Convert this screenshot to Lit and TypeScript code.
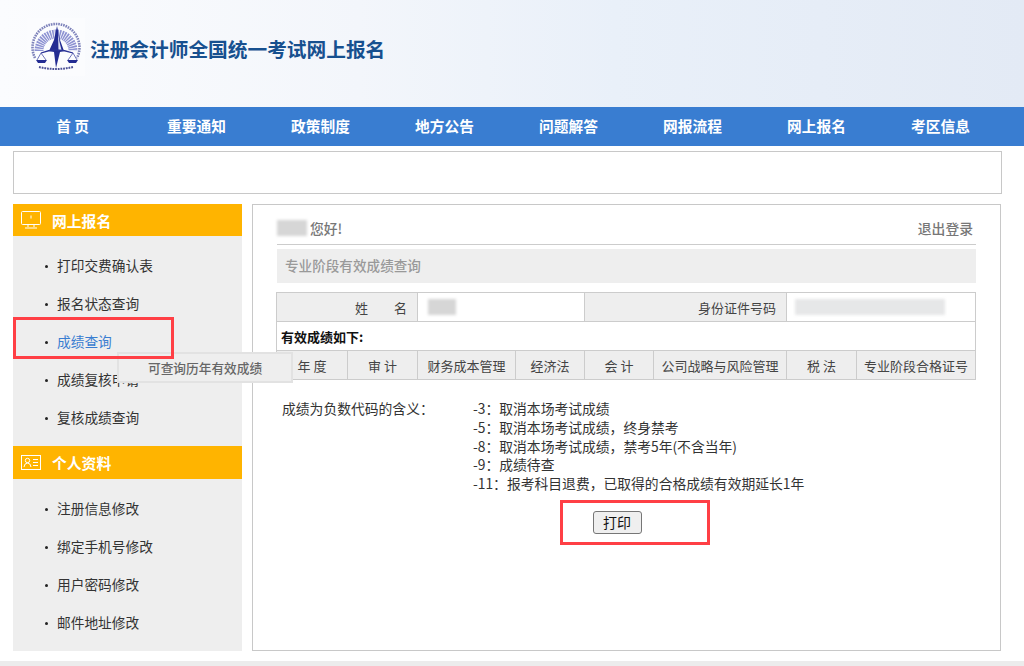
import { LitElement, html, css, svg, unsafeCSS } from 'lit';
import { customElement } from 'lit/decorators.js';

const CN = unsafeCSS(`"Noto Sans CJK SC", "Liberation Sans", sans-serif`);

const NAV = ['首 页', '重要通知', '政策制度', '地方公告', '问题解答', '网报流程', '网上报名', '考区信息'];
const MENU_A = ['打印交费确认表', '报名状态查询', '成绩查询', '成绩复核申请', '复核成绩查询'];
const MENU_B = ['注册信息修改', '绑定手机号修改', '用户密码修改', '邮件地址修改'];
const SCORE_COLS = [
  ['年 度', 71], ['审 计', 70], ['财务成本管理', 98], ['经济法', 69], ['会 计', 69],
  ['公司战略与风险管理', 133], ['税 法', 70], ['专业阶段合格证号', 119],
] as const;
const CODES = [
  '-3：取消本场考试成绩',
  '-5：取消本场考试成绩，终身禁考',
  '-8：取消本场考试成绩，禁考5年(不含当年)',
  '-9：成绩待查',
  '-11：报考科目退费，已取得的合格成绩有效期延长1年',
];

const logo = svg`
  <svg class="logo" width="58" height="58" viewBox="0 0 58 58">
    <rect width="58" height="58" fill="#fbfcfe" />
    <path d="M8 40A23.5 23.5 0 1 1 50 40" fill="none" stroke="#7d82ba" stroke-width="2.6" stroke-dasharray="1.6 .9" />
    <path d="M12 33a17 17 0 0 1 34 0" fill="none" stroke="#8d92d2" stroke-width="9" stroke-dasharray="1.5 .8" />
    <path d="M30 8l3 14 4 11-4 1-4 16-2-16-5-1 5-11z" fill="#232c92" />
    <path d="M31 14l1.5 10 2 8-3 1z" fill="#dfe2f5" />
    <path d="M14 35q15-6 32 0" fill="none" stroke="#2a3396" stroke-width="1.3" />
    <path d="M14 35l-4 7M14 35l5 7M46 35l-5 7M46 35l4 7" stroke="#4a50a8" stroke-width=".8" fill="none" />
    <path d="M9 42h11l-2 3h-7zM40 42h11l-2 3h-7z" fill="#232c92" />
    <path d="M12 49q17 4 34 0" fill="none" stroke="#4b5096" stroke-width="2" stroke-dasharray="1.8 .9" />
  </svg>`;

const monitorIcon = svg`
  <svg width="20" height="18" viewBox="0 0 20 18" fill="none" stroke="#fff" stroke-width="1">
    <rect x=".5" y=".5" width="19" height="13" rx="1" />
    <path d="M10 4.5v3M7 14v2M13 14v2M4 17h12" />
  </svg>`;

const cardIcon = svg`
  <svg width="20" height="15" viewBox="0 0 20 15" fill="none" stroke="#fff" stroke-width="1">
    <rect x=".5" y=".5" width="19" height="14" />
    <circle cx="6.5" cy="5.5" r="2.2" />
    <path d="M3 12q.5-4 3.5-4t3.5 4M12 4.5h5M12 7.5h5M12 10.5h5" />
  </svg>`;

@customElement('app-root')
export class AppRoot extends LitElement {
  static styles = css`
    :host {
      display: block;
      width: 1024px;
      height: 666px;
      overflow: hidden;
      position: relative;
      background: #fff;
      font-family: ${CN};
      font-size: 14px;
      color: #333;
    }
    .head {
      height: 107px;
      box-sizing: border-box;
      padding: 18px 0 0 27px;
      display: flex;
      gap: 5px;
      background: linear-gradient(90deg, #fbfcfe 0%, #f3f6fb 35%, #e9f0f9 60%, #e3eaf5 100%);
    }
    .logo {
      filter: blur(0.4px);
    }
    .title {
      margin-top: 17px;
      font-size: 19.7px;
      line-height: 28px;
      font-weight: 700;
      color: #17508f;
    }
    nav {
      height: 39px;
      background: #397dd1;
      display: flex;
      padding-left: 10.5px;
    }
    nav a {
      width: 124px;
      line-height: 38px;
      text-align: center;
      color: #fff;
      font-size: 14.7px;
      font-weight: 700;
    }
    .notice {
      height: 41px;
      margin: 5px 22px 0 13px;
      border: 1px solid #c8c8c8;
    }
    .main {
      display: flex;
      gap: 10px;
      margin: 10px 23px 0 13px;
    }
    aside {
      width: 229px;
      height: 447px;
      background: #eee;
    }
    .side-head {
      height: 32px;
      background: #ffb400;
      display: flex;
      align-items: center;
      gap: 11px;
      padding-left: 8px;
      color: #fff;
      font-size: 14.8px;
      font-weight: 700;
    }
    ul + .side-head {
      height: 33px;
    }
    aside ul {
      list-style: none;
      margin: 0;
      padding: 9.6px 0 10px 32px;
    }
    aside li {
      height: 38.1px;
      display: flex;
      align-items: center;
      gap: 9px;
      font-size: 13.7px;
      white-space: nowrap;
    }
    aside li::before {
      content: '';
      width: 3px;
      height: 3px;
      border-radius: 50%;
      background: #222;
      margin-top: 3px;
    }
    aside li.on {
      color: #397dd1;
    }
    .panel {
      width: 749px;
      height: 447px;
      box-sizing: border-box;
      border: 1px solid #c8c8c8;
      padding: 7px 24px 0 24px;
    }
    .hello {
      height: 32px;
      display: flex;
      align-items: center;
      justify-content: space-between;
      border-bottom: 1px solid #ccc;
      padding-right: 3px;
      font-size: 13.8px;
      color: #777;
      font-weight: 500;
    }
    .who {
      display: flex;
      align-items: center;
    }
    .blur {
      display: inline-block;
      background: #d6d6d6;
      filter: blur(1.5px);
    }
    .hello .blur {
      width: 30px;
      height: 16px;
      margin-right: 3px;
    }
    .sub {
      height: 34px;
      margin-top: 4px;
      padding-left: 8px;
      background: #eee;
      line-height: 33px;
      color: #999;
      font-size: 13.6px;
      font-weight: 500;
    }
    table {
      width: 699px;
      margin: 9px 0 0 -1px;
      border-collapse: collapse;
      table-layout: fixed;
      font-size: 13px;
    }
    td {
      border: 1px solid #ccc;
      height: 28px;
      padding: 0;
      text-align: center;
      background: #eee;
      white-space: nowrap;
      color: #444;
    }
    td.blank {
      background: #fff;
      text-align: left;
    }
    td.label-r {
      text-align: right;
      padding-right: 10px;
    }
    td.all {
      background: #fff;
      text-align: left;
      padding-left: 4px;
      font-weight: 700;
      color: #111;
    }
    td .blur.name {
      width: 28px;
      height: 16px;
      margin: 3px 0 0 10px;
    }
    td .blur.id {
      width: 150px;
      height: 16px;
      margin: 3px 0 0 8px;
      background: #e6e7e8;
    }
    .codes {
      display: flex;
      margin: 19px 0 0 5px;
      line-height: 18.8px;
      font-size: 13.8px;
      color: #333;
    }
    .codes > div:first-child {
      width: 191px;
    }
    .print {
      display: flex;
      justify-content: center;
      margin-top: 18px;
      padding-right: 19px;
    }
    button {
      width: 49px;
      height: 23px;
      padding: 0;
      background: #efefef;
      border: 1px solid #767676;
      border-radius: 3px;
      font: 14px ${CN};
      color: #111;
    }
    .mark {
      position: absolute;
      box-sizing: border-box;
      border: 3px solid #ff3f45;
    }
    .mark.a {
      left: 13px;
      top: 317px;
      width: 161px;
      height: 42px;
    }
    .mark.b {
      left: 560px;
      top: 500px;
      width: 150px;
      height: 45px;
    }
    .tip {
      position: absolute;
      left: 117px;
      top: 352px;
      width: 176px;
      height: 31px;
      box-sizing: border-box;
      background: #eee;
      border: 2px solid #e2e2e2;
      padding-left: 29px;
      line-height: 27px;
      font-size: 12.7px;
      color: #666;
      font-weight: 500;
    }
    .foot {
      position: absolute;
      left: 0;
      right: 0;
      top: 661px;
      height: 5px;
      background: #ececec;
    }
  `;

  private renderMenu(items: string[]) {
    return html`<ul>
      ${items.map((m) => html`<li class=${m === '成绩查询' ? 'on' : ''}>${m}</li>`)}
    </ul>`;
  }

  render() {
    return html`
      <div class="head">
        ${logo}
        <div class="title">注册会计师全国统一考试网上报名</div>
      </div>
      <nav>${NAV.map((n) => html`<a>${n}</a>`)}</nav>
      <div class="notice"></div>
      <div class="main">
        <aside>
          <div class="side-head">${monitorIcon}<span>网上报名</span></div>
          ${this.renderMenu(MENU_A)}
          <div class="side-head">${cardIcon}<span>个人资料</span></div>
          ${this.renderMenu(MENU_B)}
        </aside>
        <section class="panel">
          <div class="hello">
            <span class="who"><i class="blur"></i>您好!</span>
            <span>退出登录</span>
          </div>
          <div class="sub">专业阶段有效成绩查询</div>
          <table>
            <colgroup>
              ${SCORE_COLS.map(([, w]) => html`<col style="width:${w}px" />`)}
            </colgroup>
            <tr>
              <td colspan="2" class="label-r">姓&emsp;&emsp;名</td>
              <td colspan="2" class="blank"><i class="blur name"></i></td>
              <td colspan="2" class="label-r">身份证件号码</td>
              <td colspan="2" class="blank"><i class="blur id"></i></td>
            </tr>
            <tr><td colspan="8" class="all">有效成绩如下:</td></tr>
            <tr>${SCORE_COLS.map(([c]) => html`<td>${c}</td>`)}</tr>
          </table>
          <div class="codes">
            <div>成绩为负数代码的含义：</div>
            <div>${CODES.map((c) => html`<div>${c}</div>`)}</div>
          </div>
          <div class="print"><button>打印</button></div>
        </section>
      </div>
      <div class="tip">可查询历年有效成绩</div>
      <div class="mark a"></div>
      <div class="mark b"></div>
      <div class="foot"></div>
    `;
  }
}
